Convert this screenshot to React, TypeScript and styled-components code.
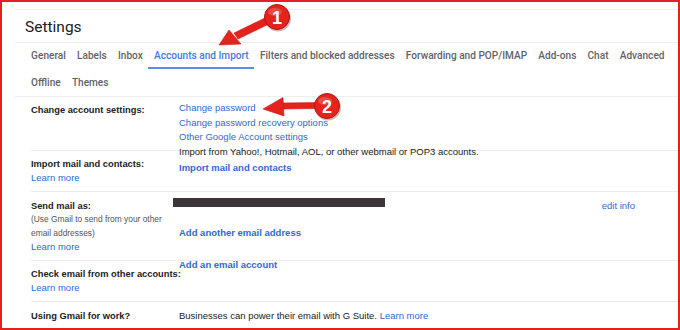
import React from 'react';
import styled, { createGlobalStyle } from 'styled-components';

const GlobalStyle = createGlobalStyle`
  html, body {
    margin: 0;
    padding: 0;
    background: #ffffff;
  }
`;

const Frame = styled.div`
  position: relative;
  width: 680px;
  height: 330px;
  box-sizing: border-box;
  border: 2px solid #e3201c;
  overflow: hidden;
  padding-left: 13px;
  font-family: 'Liberation Sans', Arial, sans-serif;
  color: #222;
`;

const Header = styled.div`
  margin-top: 7px;
  height: 34px;
  box-sizing: border-box;
  border-top: 1px solid #eeeeee;
  border-bottom: 1px solid #eeeeee;
  display: flex;
  align-items: center;
  padding: 2px 0 0 10px;
`;

const Title = styled.h1`
  margin: 0;
  font-family: Roboto, 'Liberation Sans', sans-serif;
  font-weight: 400;
  font-size: 15.5px;
  color: #202124;
`;

const Tabs = styled.nav`
  display: flex;
  flex-wrap: wrap;
  row-gap: 3px;
  padding: 2px 0 0 10.5px;
  height: 54px;
  box-sizing: border-box;
  border-bottom: 1px solid #eeeeee;
`;

const Tab = styled.span<{ $active?: boolean }>`
  height: 24px;
  box-sizing: border-box;
  line-height: 22px;
  padding: 0 5.6px;
  font-family: Roboto, 'Liberation Sans', sans-serif;
  font-weight: 500;
  font-size: 10.1px;
  white-space: nowrap;
  color: ${({ $active }) => ($active ? '#3d7be6' : '#5f6368')};
  border-bottom: 2px solid ${({ $active }) => ($active ? '#5a8ee8' : 'transparent')};
`;

const Rows = styled.div`
  margin-left: 16px;
`;

const Row = styled.div<{ $h: number; $line?: boolean }>`
  display: grid;
  grid-template-columns: 148px 1fr auto;
  align-items: start;
  height: ${({ $h }) => $h}px;
  box-sizing: border-box;
  border-top: ${({ $line }) => ($line ? '1px solid #ececec' : 'none')};
`;

const Cell = styled.div<{ $top?: number }>`
  margin-top: ${({ $top }) => $top ?? 0}px;
  display: flex;
  flex-direction: column;
  align-items: flex-start;
  font-size: 9.5px;
  line-height: 14px;
`;

const Label = styled.span`
  font-weight: 700;
  font-size: 9.3px;
  color: #222;
  white-space: nowrap;
`;

const Hint = styled.span`
  font-size: 8.4px;
  line-height: 13.5px;
  color: #555;
  white-space: nowrap;
`;

const Link = styled.a<{ $bold?: boolean; $top?: number }>`
  color: #3467cf;
  text-decoration: none;
  font-weight: ${({ $bold }) => ($bold ? 700 : 400)};
  margin-top: ${({ $top }) => $top ?? 0}px;
  white-space: nowrap;
`;

const Text = styled.span`
  color: #222;
  white-space: nowrap;
`;

const Action = styled(Cell)`
  padding-right: 43px;
`;

const Redacted = styled.div`
  width: 212px;
  height: 9px;
  margin-left: -6px;
  background: #3b3439;
`;

const Overlay = styled.svg`
  position: absolute;
  left: -2px;
  top: -2px;
  pointer-events: none;
`;

const Callout: React.FC<{ cx: number; cy: number; n: number }> = ({ cx, cy, n }) => (
  <g>
    <circle cx={cx + 1} cy={cy + 1.5} r={13} fill="rgba(0,0,0,0.25)" />
    <circle cx={cx} cy={cy} r={12.5} fill="#e4231d" stroke="#b51410" strokeWidth={1} />
    <ellipse cx={cx - 2} cy={cy - 5} rx={7} ry={4} fill="rgba(255,255,255,0.18)" />
    <text
      x={cx}
      y={cy + 6.5}
      textAnchor="middle"
      fontFamily="'Liberation Sans', Arial, sans-serif"
      fontWeight={700}
      fontSize={18}
      fill="#ffffff"
    >
      {n}
    </text>
  </g>
);

const Arrows = () => (
  <Overlay width={680} height={330} viewBox="0 0 680 330">
    <g fill="#e4231d" stroke="#c81a15" strokeWidth={0.6} strokeLinejoin="round">
      {/* arrow 1 */}
      <polygon points="265,18 269,24 238,39 234,33" />
      <polygon points="219,45 229,30 241,44" />
      {/* arrow 2 */}
      <polygon points="282,103 318,102.5 318,108.5 282,109" />
      <polygon points="263,109 283,97.5 284,116" />
    </g>
    <Callout cx={277} cy={17} n={1} />
    <Callout cx={327} cy={106} n={2} />
  </Overlay>
);

const tabs = [
  'General',
  'Labels',
  'Inbox',
  'Accounts and Import',
  'Filters and blocked addresses',
  'Forwarding and POP/IMAP',
  'Add-ons',
  'Chat',
  'Advanced',
  'Offline',
  'Themes',
];

export default function App() {
  return (
    <>
      <GlobalStyle />
      <Frame>
        <Header>
          <Title>Settings</Title>
        </Header>
        <Tabs>
          {tabs.map(t => (
            <Tab key={t} $active={t === 'Accounts and Import'}>
              {t}
            </Tab>
          ))}
        </Tabs>
        <Rows>
          <Row $h={53}>
            <Cell $top={6}>
              <Label>Change account settings:</Label>
            </Cell>
            <Cell $top={4}>
              <Link href="#">Change password</Link>
              <Link href="#" $top={0.5}>Change password recovery options</Link>
              <Link href="#" $top={0.5}>Other Google Account settings</Link>
            </Cell>
          </Row>
          <Row $h={41} $line>
            <Cell $top={6}>
              <Label>Import mail and contacts:</Label>
              <Link href="#">Learn more</Link>
            </Cell>
            <Cell $top={-6}>
              <Text>Import from Yahoo!, Hotmail, AOL, or other webmail or POP3 accounts.</Text>
              <Link href="#" $bold $top={2}>Import mail and contacts</Link>
            </Cell>
          </Row>
          <Row $h={69} $line>
            <Cell $top={7}>
              <Label>Send mail as:</Label>
              <Hint>(Use Gmail to send from your other</Hint>
              <Hint>email addresses)</Hint>
              <Link href="#">Learn more</Link>
            </Cell>
            <Cell $top={6}>
              <Redacted />
              <Link href="#" $bold $top={19}>Add another email address</Link>
            </Cell>
            <Action $top={7}>
              <Link href="#">edit info</Link>
            </Action>
          </Row>
          <Row $h={41} $line>
            <Cell $top={6}>
              <Label>Check email from other accounts:</Label>
              <Link href="#">Learn more</Link>
            </Cell>
            <Cell $top={-3}>
              <Link href="#" $bold>Add an email account</Link>
            </Cell>
          </Row>
          <Row $h={30} $line>
            <Cell $top={7}>
              <Label>Using Gmail for work?</Label>
            </Cell>
            <Cell $top={7}>
              <Text>
                Businesses can power their email with G Suite. <Link href="#">Learn more</Link>
              </Text>
            </Cell>
          </Row>
        </Rows>
        <Arrows />
      </Frame>
    </>
  );
}
